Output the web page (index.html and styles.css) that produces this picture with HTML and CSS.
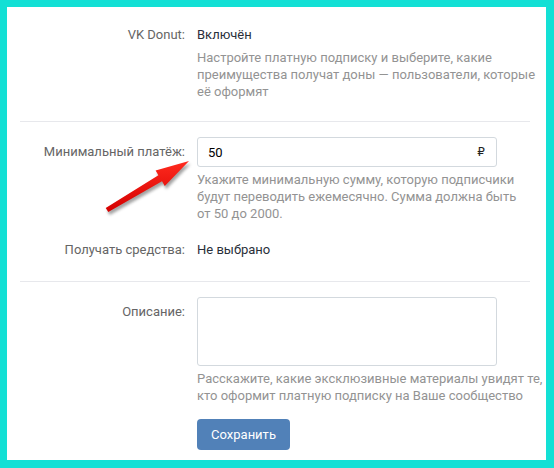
FILE: index.html
```html
<!DOCTYPE html>
<html lang="ru">
<head>
<meta charset="utf-8">
<link rel="stylesheet" href="styles.css">
</head>
<body>
<div class="frame">
  <div class="panel">
    <div class="row">
      <div class="label">VK Donut:</div>
      <div class="field">
        <div class="value">Включён</div>
        <div class="hint hint-top">Настройте платную подписку и выберите, какие<br>преимущества получат доны — пользователи, которые<br>её оформят</div>
      </div>
    </div>
    <div class="sep"></div>
    <div class="row">
      <div class="label label-input">Минимальный платёж:</div>
      <div class="field">
        <div class="input"><span class="input-val">50</span><span class="rub">₽</span></div>
        <div class="hint">Укажите минимальную сумму, которую подписчики<br>будут переводить ежемесячно. Сумма должна быть<br>от 50 до 2000.</div>
      </div>
    </div>
    <div class="row row-plain">
      <div class="label">Получать средства:</div>
      <div class="field">
        <div class="value">Не выбрано</div>
      </div>
    </div>
    <div class="sep sep-2"></div>
    <div class="row">
      <div class="label label-input">Описание:</div>
      <div class="field">
        <div class="textarea"></div>
        <div class="hint">Расскажите, какие эксклюзивные материалы увидят те,<br>кто оформит платную подписку на Ваше сообщество</div>
        <button class="btn">Сохранить</button>
      </div>
    </div>
  </div>
</div>
<svg class="arrow" width="554" height="468" viewBox="0 0 554 468">
  <defs>
    <linearGradient id="rg" x1="0" y1="0" x2="0" y2="1">
      <stop offset="0" stop-color="#ff2a1e"/>
      <stop offset="1" stop-color="#d40000"/>
    </linearGradient>
    <filter id="blur" x="-20%" y="-20%" width="140%" height="140%">
      <feGaussianBlur stdDeviation="1.6"/>
    </filter>
  </defs>
  <polygon transform="translate(1.5,3)" filter="url(#blur)" fill="#7a7a7a" opacity="0.7"
    points="105.7,207.9 158.4,175.2 155.6,170.5 189,161 164.8,185.9 162,181.2 108.3,212.1"/>
  <polygon fill="url(#rg)"
    points="105.7,207.9 158.4,175.2 155.6,170.5 189,161 164.8,185.9 162,181.2 108.3,212.1"/>
</svg>
</body>
</html>
```
FILE: styles.css
```css
html, body {
  margin: 0;
  padding: 0;
}
body {
  font-family: Roboto, "Liberation Sans", sans-serif;
  font-size: 13px;
  line-height: 17px;
  color: #000;
  width: 554px;
  height: 468px;
  position: relative;
  overflow: hidden;
}
.frame {
  background: #13e0d5;
  padding: 7px 8px 8px 7px;
  width: 539px;
  height: 453px;
}
.panel {
  background: #fff;
  height: 453px;
  box-sizing: border-box;
  padding: 19px 16px 0 13px;
}
.row {
  display: grid;
  grid-template-columns: 165px 1fr;
  column-gap: 12px;
}
.label {
  text-align: right;
  color: #656565;
  white-space: nowrap;
}
.label-input {
  padding-top: 6px;
}
.value {
  color: #2a2f3a;
}
.hint {
  color: #939393;
  white-space: nowrap;
  margin-top: 4px;
}
.hint-top {
  margin-top: 6px;
}
.sep {
  height: 1px;
  background: #e7e8ec;
  margin: 21px 0 15px;
}
.sep-2 {
  margin-top: 23px;
}
.row-plain {
  margin-top: 19px;
}
.input {
  width: 300px;
  height: 30px;
  box-sizing: border-box;
  border: 1px solid #d3d9de;
  border-radius: 3px;
  display: flex;
  align-items: center;
  justify-content: space-between;
  padding: 0 11px 0 10px;
}
.input-val {
  color: #000;
}
.rub {
  color: #222;
  font-family: "DejaVu Sans", sans-serif;
  font-size: 12px;
}
.textarea {
  width: 300px;
  height: 69px;
  box-sizing: border-box;
  border: 1px solid #d3d9de;
  border-radius: 3px;
}
.btn {
  display: block;
  margin-top: 15px;
  width: 93px;
  height: 31px;
  border: 0;
  border-radius: 4px;
  background: #5181b8;
  color: #fff;
  font-family: Roboto, "Liberation Sans", sans-serif;
  font-size: 13px;
  padding: 0;
}
.arrow {
  position: absolute;
  left: 0;
  top: 0;
  pointer-events: none;
}
```
